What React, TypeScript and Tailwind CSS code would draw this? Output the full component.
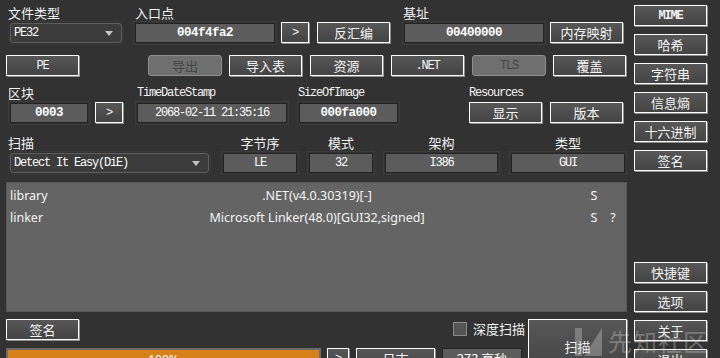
import type { ReactNode } from 'react'

const CJK = "font-['Noto_Sans_CJK_SC',sans-serif] text-[13px]"
const MONO = "font-['Liberation_Mono','Noto_Sans_CJK_SC',monospace] text-[12px] tracking-[-1.2px]"

function Btn({ className = '', mono = false, children }: { className?: string; mono?: boolean; children: ReactNode }) {
  return (
    <div
      className={`flex h-[21px] shrink-0 items-center justify-center whitespace-nowrap border border-white bg-linear-to-b from-[#575757] to-[#444444] text-[#f4f4f4] shadow-[1px_1px_0_#8c8c8c] ${mono ? MONO : CJK} ${className}`}
    >
      {children}
    </div>
  )
}

function Disabled({ className = '', mono = false, children }: { className?: string; mono?: boolean; children: ReactNode }) {
  return (
    <div
      className={`flex h-[21px] shrink-0 items-center justify-center rounded-[3px] border border-[#8e8e8e] bg-[#6f6f6f] text-[#454545] ${mono ? MONO : CJK} ${className}`}
    >
      {children}
    </div>
  )
}

function Field({ className = '', bold = false, children }: { className?: string; bold?: boolean; children: ReactNode }) {
  return (
    <div
      className={`mt-[1px] flex h-[20px] shrink-0 items-center justify-center whitespace-nowrap border border-[#242424] bg-[#5c5c5c] text-white shadow-[0_0_0_1px_#323232,0_0_0_2px_#3c3c3c] font-['Liberation_Mono','Noto_Sans_CJK_SC',monospace] ${bold ? 'text-[12.5px] font-bold tracking-[-0.5px]' : 'text-[12px] tracking-[-1.2px]'} ${className}`}
    >
      {children}
    </div>
  )
}

function Combo({ className = '', text }: { className?: string; text: string }) {
  return (
    <div
      className={`mt-[1px] flex h-[20px] shrink-0 items-center justify-between rounded-[3px] border border-[#5e5e5e] bg-[#3c3c3c] pl-[3px] pr-[8px] text-white shadow-[0_0_0_1px_#323232,0_0_0_2px_#3a3a3a] ${MONO} ${className}`}
    >
      <span className="whitespace-pre">{text}</span>
      <svg width="8" height="5" viewBox="0 0 8 5">
        <polygon points="0,0 8,0 4,5" fill="#c4c4c4" />
      </svg>
    </div>
  )
}

function Label({ className = '', mono = false, children }: { className?: string; mono?: boolean; children: ReactNode }) {
  return (
    <div className={`h-[18px] shrink-0 leading-[18px] whitespace-nowrap text-[#f2f2f2] ${mono ? MONO : CJK} ${className}`}>
      {children}
    </div>
  )
}

const results = [
  { name: 'library', value: '.NET(v4.0.30319)[-]', s: 'S', q: '' },
  { name: 'linker', value: 'Microsoft Linker(48.0)[GUI32,signed]', s: 'S', q: '?' },
]

export default function App() {
  return (
    <div className="relative flex h-[358px] w-[720px] overflow-hidden bg-[#323232]">
      {/* main area */}
      <div className="w-[634px] shrink-0">
        {/* file type / entry point / base */}
        <div className="flex h-[50px] pt-[4px]">
          <div className="ml-[8px] flex w-[116px] flex-col">
            <Label>文件类型</Label>
            <Combo className="ml-[2px] w-[112px]" text="PE32" />
          </div>
          <div className="ml-[11px] flex flex-col">
            <Label>入口点</Label>
            <div className="flex items-start">
              <Field bold className="w-[140px]">004f4fa2</Field>
              <Btn mono className="ml-[6px] w-[28px]">&gt;</Btn>
              <Btn className="ml-[8px] w-[73px]">反汇编</Btn>
            </div>
          </div>
          <div className="ml-[13px] flex flex-col">
            <Label>基址</Label>
            <div className="flex items-start">
              <Field bold className="ml-[1px] w-[140px]">00400000</Field>
              <Btn className="ml-[6px] w-[73px]">内存映射</Btn>
            </div>
          </div>
        </div>

        {/* sections row */}
        <div className="flex h-[32px] pt-[5px]">
          <Btn mono className="ml-[6px] w-[73px]">PE</Btn>
          <Disabled className="ml-[69px] w-[74px]">导出</Disabled>
          <Btn className="ml-[7px] w-[73px]">导入表</Btn>
          <Btn className="ml-[8px] w-[73px]">资源</Btn>
          <Btn mono className="ml-[8px] w-[73px]">.NET</Btn>
          <Disabled mono className="ml-[8px] w-[74px]">TLS</Disabled>
          <Btn className="ml-[7px] w-[73px]">覆盖</Btn>
        </div>

        {/* sections / timestamp / size / resources */}
        <div className="flex h-[48px] pt-[2px]">
          <div className="ml-[8px] flex flex-col">
            <Label>区块</Label>
            <div className="flex items-start">
              <Field bold className="ml-[2px] w-[78px]">0003</Field>
              <Btn mono className="ml-[7px] w-[28px]">&gt;</Btn>
            </div>
          </div>
          <div className="ml-[14px] flex flex-col">
            <Label mono>TimeDateStamp</Label>
            <Field className="w-[150px]">2068-02-11 21:35:16</Field>
          </div>
          <div className="ml-[11px] flex flex-col">
            <Label mono>SizeOfImage</Label>
            <Field bold className="ml-[1px] w-[99px]">000fa000</Field>
          </div>
          <div className="ml-[71px] flex flex-col">
            <Label mono>Resources</Label>
            <div className="flex">
              <Btn className="w-[73px]">显示</Btn>
              <Btn className="ml-[8px] w-[73px]">版本</Btn>
            </div>
          </div>
        </div>

        {/* scan engine / endianness / mode / arch / type */}
        <div className="flex h-[48px] pt-[4px]">
          <div className="ml-[8px] flex flex-col">
            <Label>扫描</Label>
            <Combo className="ml-[2px] w-[199px]" text="Detect It Easy(DiE)" />
          </div>
          <div className="ml-[14px] flex flex-col items-center">
            <Label>字节序</Label>
            <Field className="w-[74px]">LE</Field>
          </div>
          <div className="ml-[12px] flex flex-col items-center">
            <Label>模式</Label>
            <Field className="w-[64px]">32</Field>
          </div>
          <div className="ml-[12px] flex flex-col items-center">
            <Label>架构</Label>
            <Field className="w-[113px]">I386</Field>
          </div>
          <div className="ml-[13px] flex flex-col items-center">
            <Label>类型</Label>
            <Field className="w-[114px]">GUI</Field>
          </div>
        </div>

        {/* results */}
        <div className="ml-[6px] mt-[4px] h-[130px] w-[621px] border border-[#565656] bg-[#646464] pt-[2px] font-['Noto_Sans','Noto_Sans_CJK_SC',sans-serif] text-[12.5px] text-[#f4f4f4]">
          {results.map(r => (
            <div key={r.name} className="flex h-[22px] items-center">
              <div className="w-[140px] shrink-0 pl-[3px]">{r.name}</div>
              <div className="w-[340px] shrink-0 text-center whitespace-nowrap">{r.value}</div>
              <div className="ml-[100px] w-[14px] shrink-0 text-center">{r.s}</div>
              <div className="ml-[5px] w-[14px] shrink-0 text-center">{r.q}</div>
            </div>
          ))}
        </div>

        {/* bottom */}
        <div className="mt-[7px] flex">
          <div className="flex w-[522px] shrink-0 flex-col">
            <div className="flex h-[29px] shrink-0 items-start">
              <Btn className="ml-[6px] w-[73px]">签名</Btn>
              <div className="ml-[374px] mt-[3px] h-[14px] w-[14px] shrink-0 border border-[#8a8a8a] bg-[#555555]" />
              <span className={`ml-[6px] shrink-0 whitespace-nowrap leading-[20px] text-[#f2f2f2] ${CJK}`}>深度扫描</span>
            </div>
            <div className="flex items-start">
              <div className="ml-[6px] flex h-[24px] w-[315px] shrink-0 items-center justify-center border-2 border-[#6c6c6c] bg-[#d6801a] font-['Noto_Sans',sans-serif] text-[12px] text-white">
                100%
              </div>
              <Btn mono className="ml-[6px] w-[22px]">&gt;</Btn>
              <Btn className="ml-[7px] w-[79px]">日志</Btn>
              <div className={`ml-[7px] flex h-[21px] w-[80px] shrink-0 items-center justify-center whitespace-nowrap border border-[#242424] bg-[#5c5c5c] text-white ${CJK}`}>
                273 毫秒
              </div>
            </div>
          </div>
          <Btn className="ml-[6px] h-[56px] w-[99px]">扫描</Btn>
        </div>
      </div>

      {/* right column */}
      <div className="flex w-[74px] shrink-0 flex-col gap-[8px] pt-[5px]">
        <Btn mono className="w-[73px] font-bold">MIME</Btn>
        <Btn className="w-[73px]">哈希</Btn>
        <Btn className="w-[73px]">字符串</Btn>
        <Btn className="w-[73px]">信息熵</Btn>
        <Btn className="w-[73px]">十六进制</Btn>
        <Btn className="w-[73px]">签名</Btn>
        <Btn className="mt-[83px] w-[73px]">快捷键</Btn>
        <Btn className="w-[73px]">选项</Btn>
        <Btn className="w-[73px]">关于</Btn>
        <Btn className="w-[73px]">退出</Btn>
      </div>

      {/* watermark */}
      <div className="pointer-events-none absolute left-[575px] top-[326px] flex items-center gap-[5px] opacity-35">
        <svg width="28" height="30" viewBox="0 0 28 30">
          <rect x="0" y="2" width="7" height="28" fill="#d0d0d0" />
          <polygon points="9,30 27,2 27,30" fill="#d0d0d0" />
        </svg>
        <span className="font-['Noto_Sans_CJK_SC',sans-serif] text-[24px] leading-[30px] tracking-[1px] text-[#d0d0d0]">先知社区</span>
      </div>
    </div>
  )
}
